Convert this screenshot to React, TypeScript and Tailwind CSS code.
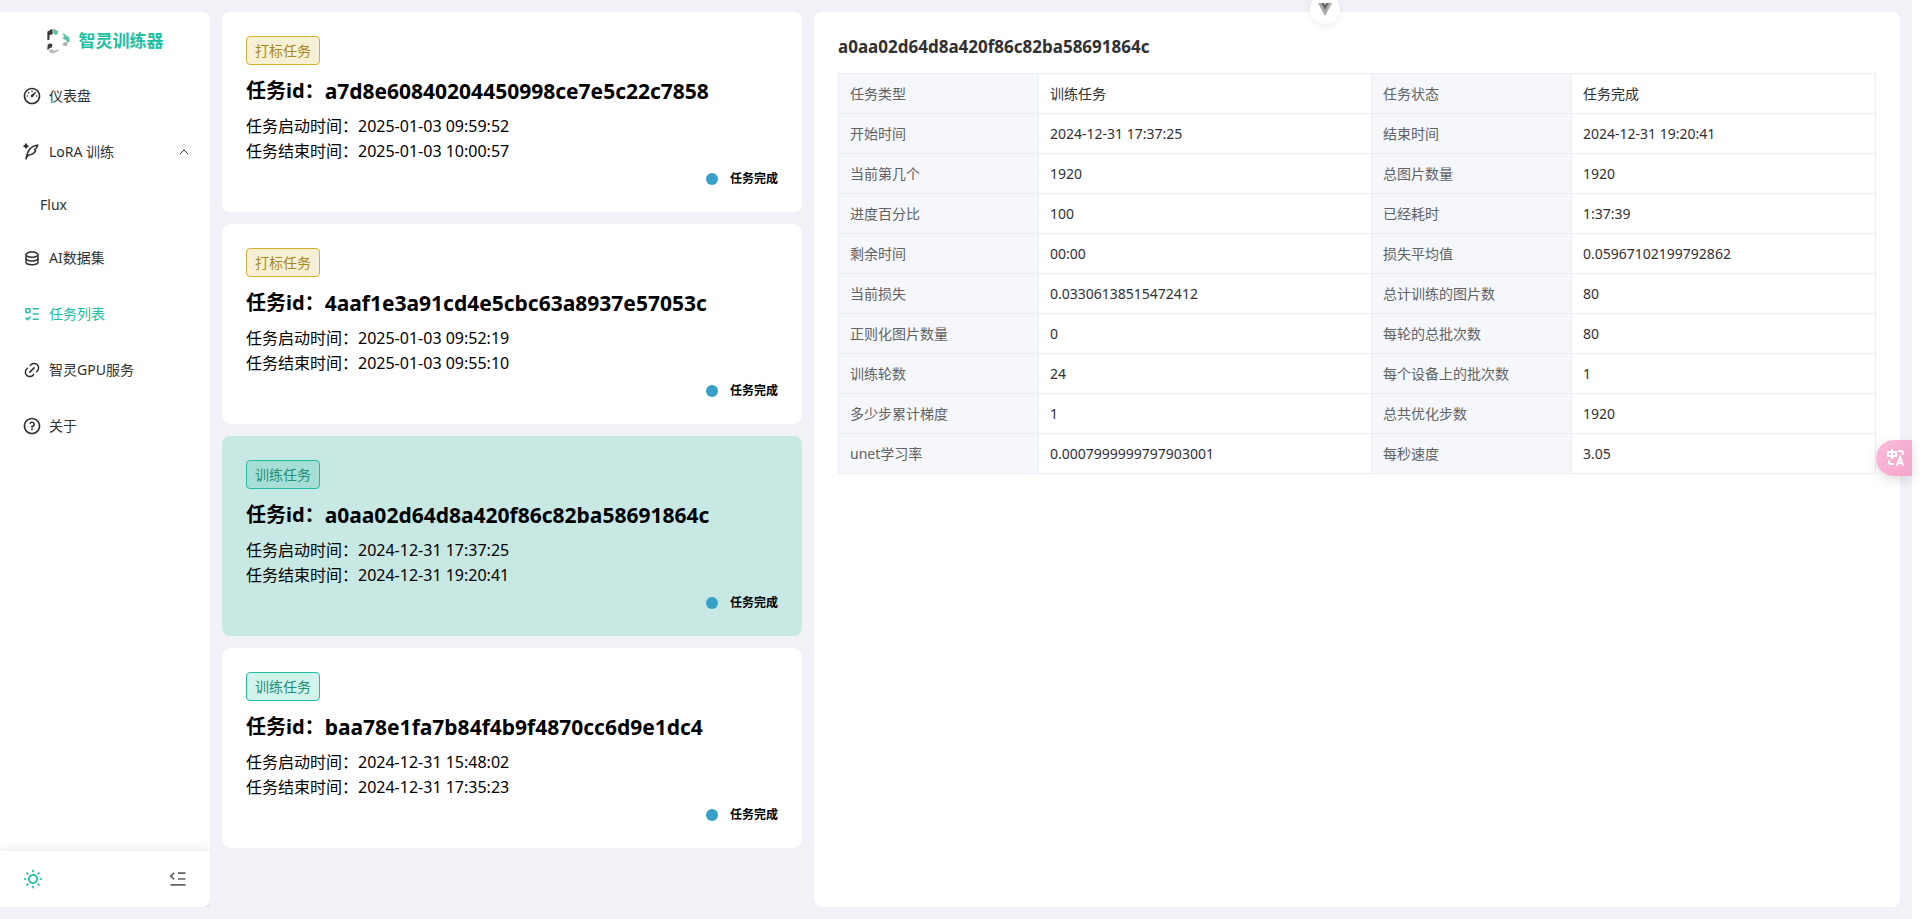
import { useState } from "react";
import clsx from "clsx";
import {
  RiDashboard3Line,
  RiDatabase2Line,
  RiLink,
  RiListCheck3,
  RiMenuFoldLine,
  RiQuestionLine,
  RiQuillPenAiLine,
  RiSunLine,
} from "react-icons/ri";

type Task = {
  id: string;
  type: "tag" | "train";
  start: string;
  end: string;
};

const tasks: Task[] = [
  {
    id: "a7d8e60840204450998ce7e5c22c7858",
    type: "tag",
    start: "2025-01-03 09:59:52",
    end: "2025-01-03 10:00:57",
  },
  {
    id: "4aaf1e3a91cd4e5cbc63a8937e57053c",
    type: "tag",
    start: "2025-01-03 09:52:19",
    end: "2025-01-03 09:55:10",
  },
  {
    id: "a0aa02d64d8a420f86c82ba58691864c",
    type: "train",
    start: "2024-12-31 17:37:25",
    end: "2024-12-31 19:20:41",
  },
  {
    id: "baa78e1fa7b84f4b9f4870cc6d9e1dc4",
    type: "train",
    start: "2024-12-31 15:48:02",
    end: "2024-12-31 17:35:23",
  },
];

// label, value, label, value
const detailRows = [
  ["任务类型", "训练任务", "任务状态", "任务完成"],
  ["开始时间", "2024-12-31 17:37:25", "结束时间", "2024-12-31 19:20:41"],
  ["当前第几个", "1920", "总图片数量", "1920"],
  ["进度百分比", "100", "已经耗时", "1:37:39"],
  ["剩余时间", "00:00", "损失平均值", "0.05967102199792862"],
  ["当前损失", "0.03306138515472412", "总计训练的图片数", "80"],
  ["正则化图片数量", "0", "每轮的总批次数", "80"],
  ["训练轮数", "24", "每个设备上的批次数", "1"],
  ["多少步累计梯度", "1", "总共优化步数", "1920"],
  ["unet学习率", "0.0007999999797903001", "每秒速度", "3.05"],
];

const menuItem = "flex h-14 w-full items-center gap-[5px] px-5";
const menuIcon = "flex w-6 shrink-0 justify-center";

function Logo() {
  return (
    <svg className="h-[26px] w-6" viewBox="0 0 72 78" aria-hidden="true">
      <path d="M1 11 14 3 17 6V19L8 21 7 36H1Z" fill="#3a3a3c" />
      <path d="M18 1 25 5 33 10 32 18 26 21 20 17Z" fill="#5fbfa8" />
      <path d="M45 16 53 18 60 24 67 28 68 43 61 42 54 35 46 30 52 26Z" fill="#5fbfa8" />
      <path d="M46 48 52 43 59 41 63 46 60 53 51 55Z" fill="#b5b5b5" />
      <path d="M2 50 9 46 16 49 15 58 9 60 1 67Z" fill="#3a3a3c" />
      <path d="M4 67 13 64 22 68 37 64 33 70 20 76 12 75Z" fill="#b5b5b5" />
    </svg>
  );
}

function Sidebar() {
  return (
    <aside className="flex w-[210px] shrink-0 flex-col rounded-r-lg bg-white text-sm text-[#303133]">
      <a href="#home" className="flex h-14 items-center justify-center gap-2 pt-[2px]">
        <Logo />
        <span className="text-[17px] font-bold text-[#20bfa2]">智灵训练器</span>
      </a>
      <nav className="flex flex-1 flex-col">
        <a href="#dashboard" className={menuItem}>
          <span className={menuIcon}><RiDashboard3Line size={20} /></span>
          仪表盘
        </a>
        <button type="button" className={menuItem}>
          <span className={menuIcon}><RiQuillPenAiLine size={18} /></span>
          LoRA 训练
          <svg className="ml-auto h-3 w-3" viewBox="0 0 12 12" fill="none" stroke="currentColor" aria-hidden="true">
            <path d="M2 8 6 4 10 8" />
          </svg>
        </button>
        <a href="#flux" className="flex h-[50px] items-center px-10">Flux</a>
        <a href="#dataset" className={menuItem}>
          <span className={menuIcon}><RiDatabase2Line size={18} /></span>
          AI数据集
        </a>
        <a href="#task" className={clsx(menuItem, "text-[#20bfa2]")}>
          <span className={menuIcon}><RiListCheck3 size={18} /></span>
          任务列表
        </a>
        <a href="#gpu" className={menuItem}>
          <span className={menuIcon}><RiLink size={18} /></span>
          智灵GPU服务
        </a>
        <a href="#about" className={menuItem}>
          <span className={menuIcon}><RiQuestionLine size={20} /></span>
          关于
        </a>
      </nav>
      <div className="flex h-14 items-center justify-between rounded-br-lg pr-[22px] pl-[23px] shadow-[0_0_12px_rgba(0,0,0,0.12)] [clip-path:inset(-14px_0_0_0)]">
        <button type="button" aria-label="切换主题" className="text-[#20bfa2]">
          <RiSunLine size={20} />
        </button>
        <button type="button" aria-label="收起菜单" className="text-[#606266]">
          <RiMenuFoldLine size={20} />
        </button>
      </div>
    </aside>
  );
}

function TaskCard({ task, active, onSelect }: { task: Task; active: boolean; onSelect: () => void }) {
  return (
    <button
      type="button"
      onClick={onSelect}
      className={clsx(
        "flex flex-col rounded-lg px-6 pt-6 pb-[23px] text-left text-black",
        active ? "bg-[#c8e8e4]" : "bg-white"
      )}
    >
      <span
        className={clsx(
          "flex h-[29px] items-center self-start rounded-sm border px-2 text-sm",
          task.type === "tag"
            ? "border-[#d4b22c] bg-[#f6f0d4] text-[#a8881c]"
            : "border-[#20bfa2] bg-[#20bfa2]/20 text-[#1f8f79]"
        )}
      >
        {task.type === "tag" ? "打标任务" : "训练任务"}
      </span>
      <span className="mt-3 flex h-7 items-center text-xl leading-7 font-bold">
        任务id：
        <span className="text-[21px]">{task.id}</span>
      </span>
      <span className="mt-[9px] text-base leading-[25px]">任务启动时间：{task.start}</span>
      <span className="text-base leading-[25px]">任务结束时间：{task.end}</span>
      <span className="mt-[5px] flex items-center gap-3 self-end text-xs leading-5 font-bold">
        <i className="h-3 w-3 rounded-full bg-[#36a0c8]" />
        任务完成
      </span>
    </button>
  );
}

export default function App() {
  const [current, setCurrent] = useState(tasks[2].id);

  return (
    <div className="relative min-h-screen overflow-hidden bg-white pr-2 font-['Noto_Sans','Noto_Sans_CJK_SC',sans-serif]">
      <div className="flex min-h-screen gap-3 bg-[#f0f2f7] py-3 pr-3">
        <Sidebar />
        <main className="grid flex-1 grid-cols-[580fr_1086fr] gap-3">
          <div className="flex flex-col gap-3">
            {tasks.map((task) => (
              <TaskCard
                key={task.id}
                task={task}
                active={task.id === current}
                onSelect={() => setCurrent(task.id)}
              />
            ))}
          </div>

          <section className="rounded-lg bg-white p-6 text-[#303133]">
            <h2 className="mb-[15px] text-[17px] leading-[22px] font-bold">{current}</h2>
            <table className="w-full table-fixed border-collapse text-sm">
              <colgroup>
                <col className="w-[200px]" />
                <col className="w-[333px]" />
                <col className="w-[200px]" />
                <col />
              </colgroup>
              <tbody>
                {detailRows.map((row) => (
                  <tr key={row[0]} className="h-10">
                    {row.map((text, i) =>
                      i % 2 === 0 ? (
                        <th
                          key={i}
                          scope="row"
                          className="border border-[#ebeef5] bg-[#f5f7fa] px-[11px] text-left font-normal text-[#606266]"
                        >
                          {text}
                        </th>
                      ) : (
                        <td key={i} className="border border-[#ebeef5] px-[11px]">
                          {text}
                        </td>
                      )
                    )}
                  </tr>
                ))}
              </tbody>
            </table>
          </section>
        </main>
      </div>

      {/* devtools handle */}
      <button
        type="button"
        aria-label="Vue DevTools"
        className="absolute -top-[6px] left-[69%] flex h-[30px] w-[30px] -translate-x-1/2 items-center justify-center rounded-full bg-white shadow-[0_2px_8px_rgba(0,0,0,0.08)]"
      >
        <svg className="h-[13px] w-[14px]" viewBox="0 0 14 13" aria-hidden="true">
          <path d="M0 0H3L7 7 11 0H14L7 13Z" fill="#a8a8a8" />
          <path d="M3 0H6L7 2 8 0H11L7 7Z" fill="#666" />
        </svg>
      </button>

      {/* translate handle */}
      <button
        type="button"
        aria-label="翻译"
        className="absolute top-[440px] right-2 flex h-9 w-9 items-center justify-center rounded-l-full bg-linear-to-br from-[#fbb4d4]/90 to-[#f49cc4]/90 pl-1 shadow-[0_4px_12px_rgba(0,0,0,0.12)]"
      >
        <svg className="h-[18px] w-[18px]" viewBox="0 0 18 18" fill="none" stroke="#fff" strokeWidth="2" strokeLinecap="round" aria-hidden="true">
          <path d="M1 3H9V7H1ZM5 1V9" />
          <path d="M12 2H14Q16 2 16 5" />
          <path d="M2 12V13Q2 15 4 15H6" />
          <path d="M10 16 13 8 16 16M11 14H15" />
        </svg>
      </button>
    </div>
  );
}
